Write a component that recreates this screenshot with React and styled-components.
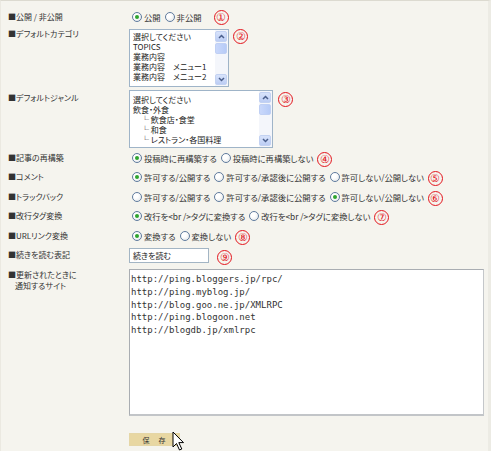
import React from "react";
import styled, { createGlobalStyle, css } from "styled-components";

const GlobalStyle = createGlobalStyle`
  html, body {
    margin: 0;
    padding: 0;
    background: #f5f4ee;
  }
  body {
    font-family: "Noto Sans CJK JP", "Noto Sans", sans-serif;
    color: #333;
  }
`;

const Page = styled.div`
  position: relative;
  width: 491px;
  height: 451px;
  box-sizing: border-box;
  padding: 7px 0 0 7px;
  background: #f5f4ee;
  border-top: 1px solid #dcdad0;
  border-left: 1px solid #ebe9e1;
  border-right: 3px solid #ecebe4;
  overflow: hidden;
`;

const Row = styled.div`
  display: flex;
  align-items: ${(p) => (p.$top ? "flex-start" : "center")};
  height: ${(p) => p.$h}px;
  margin-top: ${(p) => p.$mt || 0}px;
`;

const Label = styled.div`
  width: 121px;
  flex-shrink: 0;
  font-size: 8px;
  line-height: 10.5px;
  color: #333;
  font-feature-settings: "palt";
  padding-top: ${(p) => p.$pt || 0}px;
`;

const Indent = styled.span`
  display: block;
  padding-left: 7px;
`;

const Controls = styled.div`
  display: flex;
  align-items: ${(p) => (p.$top ? "flex-start" : "center")};
`;

const Option = styled.label`
  display: inline-flex;
  align-items: center;
  margin-left: ${(p) => (p.$first ? 3 : 4)}px;
  font-size: 8.3px;
  color: #333;
  font-feature-settings: "palt";
  white-space: nowrap;
`;

const Dot = styled.span`
  position: relative;
  width: 8px;
  height: 8px;
  margin-right: 2px;
  border: 1px solid #5f7b9e;
  border-radius: 50%;
  background: radial-gradient(circle at 35% 35%, #ffffff 30%, #dfe3e6 100%);
  ${(p) =>
    p.$on &&
    css`
      &::after {
        content: "";
        position: absolute;
        left: 2px;
        top: 2px;
        width: 4px;
        height: 4px;
        border-radius: 50%;
        background: #2fa52f;
      }
    `}
`;

const Badge = styled.span`
  display: inline-flex;
  align-items: center;
  justify-content: center;
  box-sizing: border-box;
  width: 15px;
  height: 15px;
  margin-left: ${(p) => p.$gap}px;
  margin-top: ${(p) => p.$dy ?? 3}px;
  border: 1.3px solid #e3151d;
  border-radius: 50%;
  color: #e3151d;
  font-family: "Liberation Sans", Arial, sans-serif;
  font-size: 11px;
  line-height: 1;
`;

const ListBox = styled.div`
  display: flex;
  box-sizing: border-box;
  width: ${(p) => p.$w}px;
  height: 58px;
  border: 1px solid #9fb4c8;
  background: #fff;
`;

const ListItems = styled.div`
  flex: 1;
  padding: ${(p) => p.$pt}px 0 0 3px;
  font-size: 8px;
  line-height: 10px;
  color: #222;
  font-feature-settings: "palt";
  white-space: pre;
  overflow: hidden;
`;

const Scrollbar = styled.div`
  display: flex;
  flex-direction: column;
  width: 12px;
  padding: 1px 1px 1px 0;
  background: #f4f6fb;
`;

const ArrowBtn = styled.div`
  display: flex;
  align-items: center;
  justify-content: center;
  height: 11px;
  border-radius: 2px;
  background: linear-gradient(#d8e3fb, #bccdf4);
  border: 1px solid #c3d2f2;
  box-sizing: border-box;
`;

const Thumb = styled.div`
  height: 11px;
  margin-top: 1px;
  border-radius: 2px;
  background: linear-gradient(90deg, #c9d8fb, #b7cbf7);
  border: 1px solid #c0d0f4;
  box-sizing: border-box;
`;

const Track = styled.div`
  flex: 1;
`;

const TextInput = styled.div`
  box-sizing: border-box;
  width: 80px;
  height: 15px;
  padding: 0 3px;
  border: 1px solid #a3b5c4;
  background: #fff;
  font-size: 8px;
  line-height: 13px;
  color: #222;
  font-feature-settings: "palt";
`;

const Area = styled.div`
  box-sizing: border-box;
  width: 355px;
  height: 147px;
  padding: 3px 0 0 1px;
  border: 1px solid #a9adb2;
  border-right-color: #c4c7ca;
  border-bottom: 2px solid #c2c5c8;
  background: #fff;
  font-family: "DejaVu Sans Mono", "Liberation Mono", monospace;
  font-size: 9px;
  line-height: 12.8px;
  color: #333;
  white-space: pre;
`;

const ButtonRow = styled.div`
  position: relative;
  display: flex;
  margin: 17px 0 0 121px;
`;

const SaveButton = styled.div`
  display: flex;
  align-items: center;
  justify-content: center;
  box-sizing: border-box;
  width: 51px;
  height: 13px;
  border: 1px solid #e5d6a6;
  background: #e8d7a2;
  font-size: 7px;
  color: #333;
  letter-spacing: 1px;
`;

const Pointer = styled.svg`
  position: absolute;
  left: 43px;
  top: -2px;
`;

const Chevron = ({ down }) => (
  <svg width="7" height="5" viewBox="0 0 7 5">
    <polyline
      points={down ? "1,1 3.5,3.5 6,1" : "1,4 3.5,1.5 6,4"}
      fill="none"
      stroke="#4a5f8c"
      strokeWidth="1.5"
    />
  </svg>
);

const Select = ({ width, items, pt }) => (
  <ListBox $w={width}>
    <ListItems $pt={pt}>{items.join("\n")}</ListItems>
    <Scrollbar>
      <ArrowBtn>
        <Chevron />
      </ArrowBtn>
      <Thumb />
      <Track />
      <ArrowBtn>
        <Chevron down />
      </ArrowBtn>
    </Scrollbar>
  </ListBox>
);

const Radios = ({ options, checked }) =>
  options.map((o, i) => (
    <Option key={o} $first={i === 0}>
      <Dot $on={i === checked} />
      {o}
    </Option>
  ));

const categories = ["選択してください", "TOPICS", "業務内容", "業務内容　メニュー1", "業務内容　メニュー2"];
const genres = ["選択してください", "飲食・外食", "　└ 飲食店・食堂", "　└ 和食", "　└ レストラン・各国料理"];
const pingSites = [
  "http://ping.bloggers.jp/rpc/",
  "http://ping.myblog.jp/",
  "http://blog.goo.ne.jp/XMLRPC",
  "http://ping.blogoon.net",
  "http://blogdb.jp/xmlrpc",
];

const radioRows = [
  { label: "■記事の再構築", options: ["投稿時に再構築する", "投稿時に再構築しない"], checked: 0, badge: "④" },
  { label: "■コメント", options: ["許可する/公開する", "許可する/承認後に公開する", "許可しない/公開しない"], checked: 0, badge: "⑤" },
  { label: "■トラックバック", options: ["許可する/公開する", "許可する/承認後に公開する", "許可しない/公開しない"], checked: 2, badge: "⑥" },
  { label: "■改行タグ変換", options: ["改行を<br />タグに変換する", "改行を<br />タグに変換しない"], checked: 0, badge: "⑦" },
  { label: "■URLリンク変換", options: ["変換する", "変換しない"], checked: 0, badge: "⑧" },
];

export default function App() {
  return (
    <Page>
      <GlobalStyle />
      <Row $h={18}>
        <Label>■公開 / 非公開</Label>
        <Controls>
          <Radios options={["公開", "非公開"]} checked={0} />
          <Badge $gap={12} $dy={0}>①</Badge>
        </Controls>
      </Row>
      <Row $h={58} $mt={3} $top>
        <Label $pt={0}>■デフォルトカテゴリ</Label>
        <Controls $top>
          <Select width={100} items={categories} pt={2} />
          <Badge $gap={4} $dy={0}>②</Badge>
        </Controls>
      </Row>
      <Row $h={58} $mt={3} $top>
        <Label $pt={3}>■デフォルトジャンル</Label>
        <Controls $top>
          <Select width={144} items={genres} pt={4} />
          <Badge $gap={5} $dy={2}>③</Badge>
        </Controls>
      </Row>
      {radioRows.map((r) => (
        <Row key={r.label} $h={19.5}>
          <Label>{r.label}</Label>
          <Controls>
            <Radios options={r.options} checked={r.checked} />
            <Badge $gap={4}>{r.badge}</Badge>
          </Controls>
        </Row>
      ))}
      <Row $h={15} $mt={2.5}>
        <Label>■続きを読む表記</Label>
        <Controls>
          <TextInput>続きを読む</TextInput>
          <Badge $gap={8}>⑨</Badge>
        </Controls>
      </Row>
      <Row $h={147} $mt={6} $top>
        <Label $pt={1}>
          ■更新されたときに
          <Indent>通知するサイト</Indent>
        </Label>
        <Area>{pingSites.join("\n")}</Area>
      </Row>
      <ButtonRow>
        <SaveButton>保　存</SaveButton>
        <Pointer width="14" height="21" viewBox="0 0 14 21">
          <path
            d="M1 1 L1 16 L4.5 12.5 L7.5 19 L9.8 18 L6.8 11.6 L11.5 11.6 Z"
            fill="#fff"
            stroke="#000"
            strokeWidth="1"
            strokeLinejoin="round"
          />
        </Pointer>
      </ButtonRow>
    </Page>
  );
}
